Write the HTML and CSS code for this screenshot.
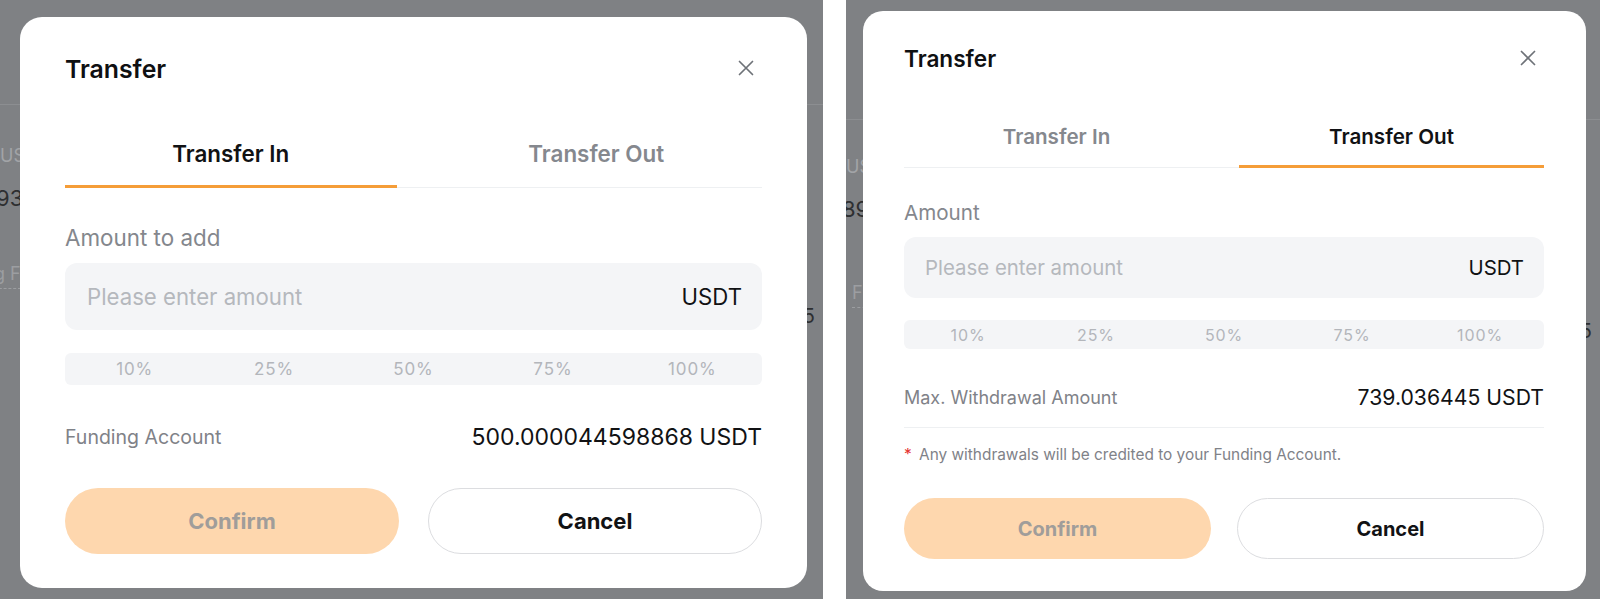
FILE: index.html
```html
<!DOCTYPE html>
<html lang="en">
<head>
<meta charset="utf-8">
<title>Transfer</title>
<link rel="stylesheet" href="styles.css">
</head>
<body>
<div class="stage">
  <section class="screen screen-a">
    <div class="page page-a">
      <div class="page-head"></div>
      <div class="page-body">
        <div class="pg-lbl">US</div>
        <div class="pg-num">93</div>
        <div class="pg-link">g F</div>
        <div class="pg-five">5</div>
      </div>
    </div>
    <div class="modal modal-a">
      <header class="modal-head">
        <h2 class="modal-title">Transfer</h2>
        <button class="close" aria-label="Close">
          <svg viewBox="0 0 16 16" width="16" height="16"><path d="M1.5 1.5 L14.5 14.5 M14.5 1.5 L1.5 14.5" stroke="#6e7278" stroke-width="1.7" stroke-linecap="round" fill="none"/></svg>
        </button>
      </header>
      <div class="tabs">
        <div class="tab is-active">Transfer In</div>
        <div class="tab">Transfer Out</div>
      </div>
      <div class="field-label">Amount to add</div>
      <div class="input">
        <span class="ph">Please enter amount</span>
        <span class="unit">USDT</span>
      </div>
      <div class="pcts">
        <span>10%</span><span>25%</span><span>50%</span><span>75%</span><span>100%</span>
      </div>
      <div class="info-row">
        <span class="info-label">Funding Account</span>
        <span class="info-val">500.000044598868 USDT</span>
      </div>
      <div class="actions">
        <button class="btn btn-confirm">Confirm</button>
        <button class="btn btn-cancel">Cancel</button>
      </div>
    </div>
  </section>

  <div class="gutter"></div>

  <section class="screen screen-b">
    <div class="page page-b">
      <div class="page-head"></div>
      <div class="page-body">
        <div class="pg-lbl">US</div>
        <div class="pg-num">89</div>
        <div class="pg-link">F</div>
        <div class="pg-five">5</div>
      </div>
    </div>
    <div class="modal modal-b">
      <header class="modal-head">
        <h2 class="modal-title">Transfer</h2>
        <button class="close" aria-label="Close">
          <svg viewBox="0 0 16 16" width="16" height="16"><path d="M1.5 1.5 L14.5 14.5 M14.5 1.5 L1.5 14.5" stroke="#6e7278" stroke-width="1.7" stroke-linecap="round" fill="none"/></svg>
        </button>
      </header>
      <div class="tabs">
        <div class="tab">Transfer In</div>
        <div class="tab is-active">Transfer Out</div>
      </div>
      <div class="field-label">Amount</div>
      <div class="input">
        <span class="ph">Please enter amount</span>
        <span class="unit">USDT</span>
      </div>
      <div class="pcts">
        <span>10%</span><span>25%</span><span>50%</span><span>75%</span><span>100%</span>
      </div>
      <div class="info-row">
        <span class="info-label">Max. Withdrawal Amount</span>
        <span class="info-val">739.036445 USDT</span>
      </div>
      <p class="note"><span class="star">*</span> Any withdrawals will be credited to your Funding Account.</p>
      <div class="actions">
        <button class="btn btn-confirm">Confirm</button>
        <button class="btn btn-cancel">Cancel</button>
      </div>
    </div>
  </section>
</div>
</body>
</html>
```

FILE: styles.css
```css
* { box-sizing: border-box; }

html, body {
  margin: 0;
  padding: 0;
  background: #ffffff;
  font-family: Inter, "Noto Sans", "Liberation Sans", sans-serif;
  color: #111214;
}

.stage {
  display: flex;
  width: 1600px;
  height: 599px;
  overflow: hidden;
}

.screen {
  position: relative;
  height: 599px;
  background: #7f8184;
  overflow: hidden;
}
.screen-a { width: 823px; }
.gutter { width: 23px; background: #ffffff; }
.screen-b { flex: 1; }

/* dimmed page peeking behind the modal */
.page-head {
  height: 105px;
  border-bottom: 1px solid #8c8e91;
}
.page-b .page-head { height: 120px; }

.page-body {
  display: flex;
  flex-direction: column;
  padding-top: 40px;
}
.page-b .page-body { padding-top: 36px; }

.pg-lbl {
  font-size: 18px;
  line-height: 22px;
  color: #a2a4a7;
  align-self: flex-start;
}
.pg-num {
  margin-top: 18px;
  font-size: 22px;
  line-height: 26px;
  color: #2e2f31;
  margin-left: -4px;
  align-self: flex-start;
}
.pg-link {
  margin-top: 52px;
  font-size: 18px;
  line-height: 22px;
  color: #9c9ea1;
  align-self: flex-start;
  padding-bottom: 3px;
  border-bottom: 1px dashed #9c9ea1;
  margin-left: -6px;
}
.page-b .pg-link { margin-left: 6px; margin-top: 60px; padding-right: 8px; }
.pg-five {
  margin-top: 16px;
  align-self: flex-end;
  font-size: 20px;
  line-height: 22px;
  color: #2e2f31;
  margin-right: 8px;
}
.page-b .pg-five { margin-top: 12px; margin-right: 8px; }

/* modal dialog over the page */
.modal {
  position: absolute;
  background: #ffffff;
  display: flex;
  flex-direction: column;
}
.modal-a {
  left: 20px;
  top: 17px;
  width: 787px;
  padding: 37px 45px 34px;
  border-radius: 22px;
}
.modal-b {
  left: 17px;
  top: 11px;
  width: 723px;
  padding: 34px 42px 32px 41px;
  border-radius: 20px;
}

.modal-head {
  display: flex;
  align-items: center;
  justify-content: space-between;
}
.modal-title {
  margin: 0;
  font-weight: 600;
  color: #0f1012;
}
.modal-a .modal-head { height: 30px; }
.modal-a .modal-title { font-size: 24.8px; line-height: 30px; }
.modal-b .modal-head { height: 28px; }
.modal-b .modal-title { font-size: 22.6px; line-height: 28px; }

.close {
  width: 32px;
  height: 32px;
  padding: 0;
  border: 0;
  background: transparent;
  display: flex;
  align-items: center;
  justify-content: center;
}
.modal-a .close { margin-top: -2px; }
.modal-b .close { margin-top: -3px; }

/* tabs */
.tabs {
  display: grid;
  grid-template-columns: 1fr 1fr;
  box-shadow: inset 0 -1px 0 #eef0f2;
}
.tab {
  text-align: center;
  font-weight: 600;
  color: #85888e;
  border-bottom: 3px solid transparent;
}
.tab.is-active {
  color: #111214;
  border-bottom-color: #f59d38;
}
.modal-a .tabs { margin-top: 56px; column-gap: 34px; }
.modal-a .tab { font-size: 22.4px; line-height: 28px; padding-bottom: 17px; }
.modal-b .tabs { margin-top: 51px; column-gap: 30px; }
.modal-b .tab { font-size: 20.6px; line-height: 26px; padding-bottom: 15px; }

/* amount field */
.field-label { color: #84878d; }
.modal-a .field-label { margin-top: 38px; font-size: 22.4px; line-height: 24px; }
.modal-b .field-label { margin-top: 33px; font-size: 20.6px; line-height: 24px; }

.input {
  display: flex;
  align-items: center;
  justify-content: space-between;
  background: #f4f5f7;
  border-radius: 12px;
}
.ph { color: #b5b8bd; }
.unit { color: #111214; }
.modal-a .input { margin-top: 13px; height: 67px; padding: 0 20px 0 22px; font-size: 22.2px; }
.modal-b .input { margin-top: 12px; height: 61px; padding: 0 20px 0 21px; font-size: 20.4px; }

.pcts {
  display: grid;
  grid-template-columns: repeat(5, 1fr);
  align-items: center;
  text-align: center;
  background: #f4f5f7;
  border-radius: 6px;
  color: #b3b6bb;
  letter-spacing: 0.9px;
}
.modal-a .pcts { margin-top: 23px; height: 32px; font-size: 17px; }
.modal-b .pcts { margin-top: 22px; height: 29px; font-size: 16px; }

/* info row */
.info-row {
  display: flex;
  align-items: center;
  justify-content: space-between;
}
.info-label { color: #7f8288; }
.info-val { color: #111214; }
.modal-a .info-row { margin-top: 38px; height: 28px; }
.modal-a .info-label { font-size: 19.5px; }
.modal-a .info-val { font-size: 23px; }
.modal-b .info-row {
  margin-top: 35px;
  height: 44px;
  padding-bottom: 17px;
  border-bottom: 1px solid #eef0f2;
}
.modal-b .info-label { font-size: 18px; }
.modal-b .info-val { font-size: 21.2px; }

.note {
  margin: 17px 0 0;
  font-size: 15.4px;
  line-height: 20px;
  color: #7f8288;
}
.star { color: #e5312f; margin-right: 3px; }

/* actions */
.actions {
  display: grid;
  grid-template-columns: 1fr 1fr;
}
.btn {
  border-radius: 999px;
  font-family: inherit;
  font-weight: 700;
  padding: 0;
}
.btn-confirm {
  background: #fed7ae;
  border: 0;
  color: #a09d9a;
}
.btn-cancel {
  background: #ffffff;
  border: 1px solid #dcdde0;
  color: #111214;
}
.modal-a .actions { margin-top: 37px; column-gap: 29px; }
.modal-a .btn { height: 66px; font-size: 22px; }
.modal-b .actions { margin-top: 33px; column-gap: 26px; }
.modal-b .btn { height: 61px; font-size: 20px; }
```
